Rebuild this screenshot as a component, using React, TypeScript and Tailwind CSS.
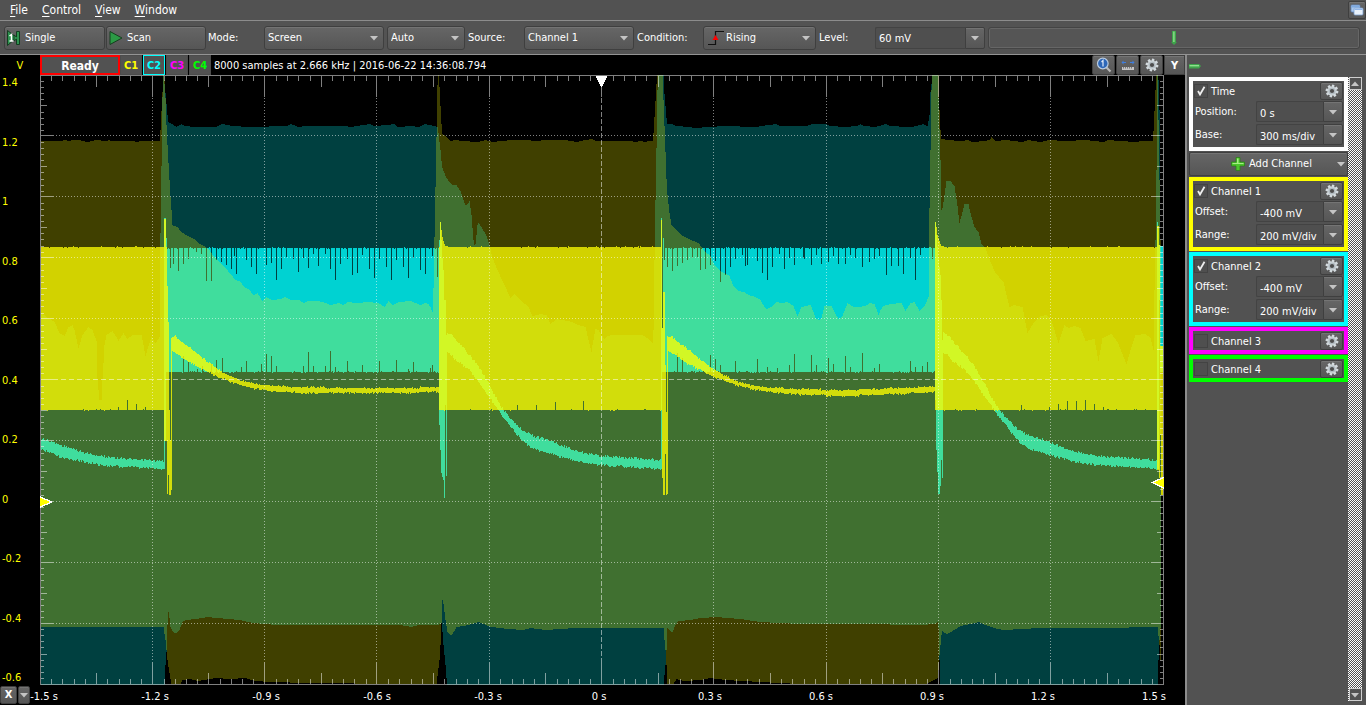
import React from "react";

type Pt = [number, number];
type Spikes = Record<number, number>;

const pts = (s: string): Pt[] =>
  s
    .trim()
    .split(/\s+/)
    .map((p) => p.split(",").map(Number) as Pt);

const spikes = (s: string): Spikes => {
  const out: Spikes = {};
  for (const p of s.trim().split(/\s+/)) {
    const [x, y] = p.split(":").map(Number);
    out[x] = y;
  }
  return out;
};

const at = (p: Pt[], x: number): number => {
  if (x <= p[0][0]) return p[0][1];
  for (let i = 1; i < p.length; i++) {
    if (x <= p[i][0]) {
      const [x0, y0] = p[i - 1];
      const [x1, y1] = p[i];
      return y0 + ((y1 - y0) * (x - x0)) / (x1 - x0);
    }
  }
  return p[p.length - 1][1];
};

const noise = (x: number, seed: number) => {
  const v = Math.sin(x * 12.9898 + seed * 78.233) * 43758.5453;
  return v - Math.floor(v);
};

/** One column per sample bucket, from the upper to the lower limit. */
function band(x0: number, x1: number, top: Pt[], bottom: Pt[], jitter = 0, up: Spikes = {}, down: Spikes = {}) {
  let d = "";
  for (let x = x0; x < x1; x++) {
    let a = at(top, x);
    let b = at(bottom, x);
    if (jitter) {
      a += Math.round((noise(x, 1) - 0.5) * 2 * jitter);
      b += Math.round((noise(x, 2) - 0.5) * 2 * jitter);
    }
    a = Math.round(up[x] ?? a);
    b = Math.round(down[x] ?? b);
    if (b > a) d += `M${x} ${a}h1V${b}h-1z`;
  }
  return d;
}

const cyanEnvTop = pts(`41,313 46,317 50,319 54,322 59,333 64,336 68,327 72,325 74,330 78,348 82,335 88,327 92,330 96,341
 97,380 99,400 101,400 102,380 104,345 106,335 112,331 116,337 118,341 123,333 127,339 132,335 141,335 143,345 145,356 148,346
 151,337 155,343 159,337 160,233 161,166 162,97 163,75 164,84 165,93 166,104 167,115 168,122 172,124 176,127 181,124
 184,126 196,127 216,127 221,124 228,125 231,126 250,127 286,126 290,124 294,125 298,127 304,126 345,126 350,127 356,126
 370,124 373,126 387,125 394,124 397,127 412,126 418,127 424,124 430,125 437,127 438,133 439,142 440,150 441,161 442,168
 445,176 448,181 452,185 456,185 460,191 463,200 465,205 467,204 469,201 471,215 473,240 474,245 475,244 477,225 478,223
 481,227 486,236 489,245 492,258 497,270 503,283 510,298 514,294 520,300 528,307 532,316 540,314 546,315 550,324 556,319
 568,321 574,323 578,325 585,327 588,340 591,352 592,345 595,329 598,330 604,339 607,336 612,335 642,335 648,339 652,343
 653,330 654,260 655,200 656,148 657,90 658,75 663,75 664,94 665,106 666,118 667,124 672,124 676,126 690,127 694,128
 724,126 755,127 768,125 776,124 780,126 806,126 812,124 825,124 830,126 845,127 856,126 860,124 864,126 875,127 885,124
 890,126 908,127 912,127 923,124 927,126 929,115 930,92 932,75 937,75 938,98 940,160 941,210 942,208 944,195 946,181
 950,181 954,186 957,206 959,223 962,212 964,204 968,204 970,213 974,227 978,232 981,244 985,248 990,262 995,273 1003,282
 1006,295 1009,307 1014,305 1022,307 1027,333 1033,323 1040,316 1046,315 1051,321 1058,343 1064,325 1068,328 1074,326
 1080,328 1085,341 1094,339 1098,361 1102,338 1111,334 1117,342 1126,364 1130,350 1135,335 1145,334 1150,338 1153,350
 1154,290 1155,240 1156,170 1157,75 1158,80 1159,110 1160,245`);

const cyanEnvBottom = pts(`41,690 164,690 165,665 166,652 167,625 168,612 169,618 170,627 172,631 174,633 176,633 179,630
 182,622 185,620 195,619 207,617 217,618 228,619 240,620 247,622 262,624 280,625 400,625 411,627 418,625 438,625 441,623
 442,632 443,645 445,665 447,690 663,690 664,675 665,665 666,650 667,628 670,631 672,632 675,625 678,621 690,620 700,618
 716,617 740,619 760,622 800,624 880,624 900,625 920,625 935,624 937,622 938,628 939,660 940,690 1157,690 1158,660
 1159,640 1161,615`);

const yellowEnvTop = pts(`41,141 61,141 63,140 66,140 68,141 72,140 79,140 82,141 87,142 96,140 106,141 108,140 112,141
 133,141 137,142 140,141 159,141 160,130 161,111 162,92 163,75 164,80 165,98 166,125 167,145 168,163 169,180 170,197
 171,210 172,225 174,226 177,227 180,231 185,235 190,237 194,239 198,243 204,246 209,250 213,256 219,262 225,268 230,274
 235,280 239,281 244,287 249,290 253,295 257,293 260,298 262,301 266,297 272,300 280,299 285,297 290,300 299,300 303,303
 308,301 318,301 325,303 330,305 338,303 343,305 347,302 357,303 368,302 378,303 384,307 388,301 392,305 398,302 410,301
 415,303 420,305 425,303 428,304 430,307 432,312 433,288 434,237 435,187 436,137 437,85 438,75 439,87 440,106 441,124
 442,134 445,136 450,141 455,140 463,141 477,142 485,140 492,142 500,141 512,140 530,140 532,141 548,140 565,140 576,142
 585,140 592,139 596,141 632,141 634,142 640,141 645,142 648,141 652,141 653,133 654,117 655,101 656,84 657,75 662,75
 663,100 664,126 665,152 666,179 667,195 668,204 669,213 671,225 676,230 681,235 687,238 693,241 698,243 701,247 705,252
 710,256 714,265 720,271 729,276 733,286 738,291 744,292 748,295 755,297 760,300 764,307 766,309 772,306 776,302 782,303
 787,302 793,306 797,316 801,307 810,305 813,312 815,318 819,320 821,318 824,306 831,306 834,312 838,319 842,316 847,303
 853,307 858,307 865,306 869,303 874,304 876,309 878,315 880,310 883,306 890,304 901,303 905,311 910,303 914,302 919,311
 924,306 928,297 929,208 930,150 931,90 932,75 938,75 939,110 940,130 941,139 948,140 960,141 968,140 972,142 984,141
 989,140 991,137 995,141 1005,140 1022,142 1028,140 1040,142 1048,140 1065,141 1085,140 1103,142 1108,140 1120,141
 1135,142 1142,141 1152,141 1153,131 1154,111 1155,90 1156,75 1157,75 1158,120 1159,180 1160,240`);

const yellowEnvBottom = pts(`41,627 163,627 165,640 167,660 169,673 171,684 180,684 182,680 190,679 198,681 215,678 230,679
 245,678 255,681 270,682 310,683 400,684 436,684 439,660 440,645 441,623 442,600 443,604 445,620 447,632 450,635 452,634
 456,627 468,625 478,622 488,626 492,627 508,629 523,630 530,628 545,630 560,629 575,628 663,628 664,640 665,650 666,665
 667,684 673,684 676,679 684,681 700,680 710,678 725,680 760,682 800,684 925,684 930,682 937,678 938,670 939,655 940,645
 941,635 942,631 946,634 952,631 960,626 970,624 978,622 985,625 997,629 1005,630 1020,629 1040,628 1100,628 1157,627
 1158,636 1159,645 1160,660`);

const flat = (y: number): Pt[] => [[0, y]];

const cyanDips2 = spikes(`170:268 173:264 178:271 183:264 188:259 196:252 201:254 206:281 211:281 216:260 221:262 226:265
 231:269 234:256 236:274 246:260 251:267 256:274 266:265 271:263 276:280 281:269 286:257 293:259 298:272 303:258 308:268
 313:254 318:266 325:254 330:269 335:280 340:264 347:259 352:275 357:273 362:255 369:269 374:278 379:259 386:267 391:280
 396:260 403:267 408:278 413:258 420:270 425:274 432:256 437:277`);
const cyanRises2 = spikes(`183:356 188:362 197:369 202:366 211:364 216:360 222:358 241:367 246:361 261:364 266:354 271:356
 276:366 303:366 308:352 313:366 325:366 330:351 335:367 347:361 362:365 379:361 396:360 408:369 413:362 430:368 432:365`);
const cyanDips4 = spikes(`664:260 667:267 672:271 677:266 682:263 687:260 692:258 697:257 700:270 705:269 710:265 715:261
 720:282 725:275 730:267 735:259 742:255 745:266 747:265 757:261 762:273 767:280 772:267 779:254 784:269 789:258 794:265
 803:258 804:259 811:265 816:255 821:264 828:262 833:256 838:264 845:264 850:255 855:258 862:267 869:262 874:259 879:256
 886:275 891:266 898:266 903:274 910:258 915:280 920:255 932:259`);
const cyanRises4 = spikes(`677:353 682:358 710:355 715:359 720:365 735:361 757:359 767:367 777:368 789:365 794:354 811:355
 816:365 828:358 833:364 845:356 850:367 862:353 874:368 879:364 910:361 915:367 922:366 927:362`);
const yellowRises = spikes(`118:407 127:400 136:404 145:407 517:405 536:405 555:402 583:401 1021:405 1049:407 1058:404
 1067:401 1076:401 1085:400 1094:404 1103:407`);

const decayTop = `450,334 460,345 470,356 480,369 490,387 500,406 510,418 522,430 533,436 545,439 560,445 580,452 600,456
 630,458 662,460`;
const decayBottom = `450,354 455,360 468,369 476,379 490,399 502,416 510,426 515,433 523,442 533,449 545,452 560,457 580,462
 600,465 630,467 661,469`;
const shift = (p: Pt[], dx: number): Pt[] => p.map(([x, y]) => [x + dx, y]);

const CYAN_ENV = band(41, 1161, cyanEnvTop, cyanEnvBottom) + "M1160 246h3V372h-3z";
const YELLOW_ENV = band(41, 1161, yellowEnvTop, yellowEnvBottom) + "M1161 346h2V495h-2z";

const CYAN_MAIN =
  band(
    41,
    164,
    pts("41,439 50,441 60,445 70,448 85,453 100,456 120,458 140,460 163,461"),
    pts("41,450 50,452 60,457 80,461 100,465 125,467 150,468 164,469"),
    1,
  ) +
  "M164 218h2V441h-1V469h-1zM166 238h1V372h-1z" +
  band(167, 439, flat(248.4), flat(371.6), 0.6, cyanDips2, cyanRises2) +
  band(439, 446, pts("439,240 440,222 441,240 442,258 443,270 444,300 445,300"), pts("439,425 440,450 441,473 443,480 444,498 445,405")) +
  "M446 335h1V476h-1z" +
  band(447, 661, pts(`447,333 ${decayTop}`), pts(`447,353 ${decayBottom}`), 1) +
  "M661 218h1V469h-1zM662 328h1V238h1V372h-2z" +
  band(664, 935, flat(248.4), flat(371.6), 0.6, cyanDips4, cyanRises4) +
  band(935, 943, pts("935,222 936,235 938,258 940,275 941,300 942,340"), pts("935,400 936,450 938,494 939,494 940,486 941,460 942,478")) +
  band(943, 1158, shift(pts(`447,333 ${decayTop}`), 496), shift(pts(`447,353 ${decayBottom}`), 496), 1) +
  "M1157 222h1V245h2V300h-1V469h-2zM1160 246h3V372h-3z";

const curveBottom =
  "172,351 180,356 190,363 205,371 220,378 240,385 255,389 280,392 310,393 350,393 400,393 438,392";
const curveTop =
  "171,337 175,336 180,341 190,348 200,356 210,364 225,374 240,380 255,384 275,386 300,387 350,388 400,388 438,387";

const YELLOW_MAIN =
  band(41, 164, flat(247.4), flat(410.4), 0.55, {}, yellowRises) +
  "M164 219h2V441h-2zM166 247h1V441h-1zM167 286h1V494h-1zM168 322h1V475h-1zM169 410h1V495h-1zM170 440h1V495h-1zM171 338h1V490h-1z" +
  band(172, 439, pts(curveTop), pts(curveBottom), 0.7) +
  band(439, 661, pts("439,247 440,222 441,230 442,237 443,241 445,246 450,247"), flat(410.4), 0.55, {}, yellowRises) +
  "M661 220h1V410h-1zM662 328h1V478h-1zM663 292h2V495h-2zM665 365h1V454h-1zM666 412h1V495h-1zM667 336h1V494h-1z" +
  band(668, 935, shift(pts("171,337 175,336 180,341 190,348 200,356 210,364 225,374 240,381 255,385 275,388 300,389 350,390 400,388 438,387"), 496), shift(pts("172,351 180,356 190,363 205,371 220,378 240,385 255,389 280,393 310,395 350,396 400,394 438,392"), 496), 0.7) +
  band(935, 1157, pts("935,222 936,228 937,235 939,241 941,246 946,247"), flat(410.4), 0.55, {}, yellowRises) +
  "M1157 226h2V470h-2zM1159 245h1V478h-1zM1160 346h1V435h-1zM1161 346h2V495h-2z";

const GRID_Y = [135, 196, 257, 318, 379, 440, 501, 562, 623];
const GRID_X = [152, 264, 376, 489, 601, 713, 826, 938, 1050];

function ticks() {
  let d = "";
  for (let i = 1; i < 100; i++) {
    const x = i % 10 === 0 ? GRID_X[i / 10 - 1] : Math.round(40 + i * 11.23);
    const len = i % 10 === 0 ? 21 : i % 5 === 0 ? 11 : 5;
    d += `M${x} 76h1v${len}h-1zM${x} ${684 - len}h1v${len}h-1z`;
    const y = i % 10 === 0 ? GRID_Y[i / 10 - 1] : Math.round(75 + i * 6.09);
    const w = i % 10 === 0 ? 12 : i % 5 === 0 ? 6 : 3;
    if (y < 684) d += `M41 ${y}h${w}v1h-${w}zM${1163 - w} ${y}h${w}v1h-${w}z`;
  }
  return d;
}
const TICKS = ticks();

function Plot() {
  return (
    <svg
      className="h-full min-h-0 w-full min-w-0"
      viewBox="40 75 1124 610"
      preserveAspectRatio="none"
      role="img"
      aria-label="Oscilloscope channels 1 and 2"
      shapeRendering="crispEdges"
    >
      <path d={CYAN_ENV} fill="#00ffff" fillOpacity="0.25" />
      <path d={CYAN_MAIN} fill="#00ffff" fillOpacity="0.765" />
      <path d={YELLOW_ENV} fill="#ffff00" fillOpacity="0.25" />
      <path d={YELLOW_MAIN} fill="#ffff00" fillOpacity="0.765" />
      <g stroke="#ffffff" strokeOpacity="0.5" strokeWidth="1" fill="none">
        {GRID_Y.map((y) => (
          <path key={y} d={`M53 ${y + 0.5}H1151`} strokeDasharray={y === 379 ? "5 3" : "1 2"} />
        ))}
        {GRID_X.map((x) => (
          <path key={x} d={`M${x + 0.5} 98V663`} strokeDasharray={x === 601 ? "5 2" : "1 2"} />
        ))}
        <path d="M40.5 684.5V75.5H1163.5V684.5Z" />
      </g>
      <path d={TICKS} fill="#ffffff" fillOpacity="0.5" />
      <path d="M595 75.500h13l-6.500 12z" fill="#ffffff" />
      <path d="M40 496l13 6-13 6z" fill="#ffffff" />
      <path d="M40 497.500l10 4.500-10 4.500z" fill="#ffff00" />
      <path d="M1164 476.500l-13 6 13 6.500z" fill="#ffffff" />
      <path d="M1164 478l-10 4.500 10 5z" fill="#ffff00" />
    </svg>
  );
}

const raised = "border border-[#3f3f3f] bg-linear-to-b from-[#666666] to-[#565656] shadow-[inset_0_1px_0_#747474]";
const sunken = "border border-[#434343] bg-[#4f4f4f]";

function Caret({ className = "" }: { className?: string }) {
  return (
    <svg className={`pointer-events-none h-1.5 w-2 ${className}`} viewBox="0 0 8 6" aria-hidden="true">
      <path d="M0 1h8L4 5.500z" fill="#c4c4c4" />
    </svg>
  );
}

function Gear() {
  return (
    <svg width="14" height="14" viewBox="0 0 14 14" aria-hidden="true">
      <g fill="#d3dade">
        {[0, 45, 90, 135].map((a) => (
          <rect key={a} x="5.700" y="0.600" width="2.600" height="12.800" rx="0.500" transform={`rotate(${a + 12} 7 7)`} />
        ))}
        <circle cx="7" cy="7" r="4.600" />
      </g>
      <circle cx="7" cy="7" r="3.600" fill="#b3bcc2" />
      <circle cx="7" cy="7" r="2.100" fill="#4d4d4d" />
    </svg>
  );
}

function Drop({ label, id, width, options, icon }: { label: string; id: string; width: string; options: string[]; icon?: React.ReactNode }) {
  return (
    <div className={`grid h-6 items-center ${width}`}>
      <select
        id={id}
        aria-label={label}
        className={`col-start-1 row-start-1 h-full w-full appearance-none rounded-[3px] ${raised} ${icon ? "pl-[22px]" : "pl-[3px]"}`}
      >
        {options.map((o) => (
          <option key={o}>{o}</option>
        ))}
      </select>
      {icon && <span className="pointer-events-none col-start-1 row-start-1 justify-self-start pl-1">{icon}</span>}
      <Caret className="col-start-1 row-start-1 mr-1.5 justify-self-end" />
    </div>
  );
}

function Combo({ id, value, label, className }: { id: string; value: string; label: string; className: string }) {
  return (
    <div className={`flex ${className}`}>
      <input id={id} defaultValue={value} className={`h-full w-0 min-w-0 flex-1 rounded-l-[2px] border-r-0 pt-0.5 pl-[3px] ${sunken}`} />
      <button type="button" aria-label={`${label} presets`} className={`flex h-full w-5 items-center justify-center rounded-r-[2px] ${raised}`}>
        <Caret />
      </button>
    </div>
  );
}

function MenuBar() {
  return (
    <header className="flex h-[21px] shrink-0 items-center border-b border-[#8c8c8c] bg-[#525252] pl-2.5">
      <nav className="flex gap-3.5 text-[12px] leading-4" aria-label="Main menu">
        {["File", "Control", "View", "Window"].map((m) => (
          <button key={m} type="button">
            <span className="underline underline-offset-2">{m[0]}</span>
            {m.slice(1)}
          </button>
        ))}
      </nav>
      <button type="button" aria-label="Restore window" className={`ml-auto flex h-[18px] w-[18px] items-center justify-center rounded-[2px] ${raised}`}>
        <svg width="14" height="14" viewBox="0 0 14 14" aria-hidden="true">
          <rect x="1" y="2" width="9" height="7" rx="1" fill="#a9c8ee" stroke="#5f86bd" strokeWidth="0.800" />
          <rect x="1.500" y="2.500" width="8" height="2" fill="#7ea9e0" />
          <rect x="4" y="5" width="9" height="7" rx="1" fill="#e8f1fb" stroke="#7fa2d0" strokeWidth="0.800" />
          <rect x="4.500" y="5.500" width="8" height="1.500" fill="#8fb5ea" />
        </svg>
      </button>
    </header>
  );
}

function Toolbar() {
  return (
    <div className="flex h-[34px] shrink-0 items-center border-b border-[#949494] bg-[#535353] pr-1.5 pl-1">
      <button type="button" className={`flex h-6 w-[101px] items-center gap-1 rounded-[3px] pl-0.5 ${raised}`}>
        <svg width="14" height="16" viewBox="0 0 14 16" aria-hidden="true">
          <path d="M0.500 0.500l9 7-9 8z" fill="#2f9350" stroke="#143d20" />
          <path d="M9.500 1.500h3v13h-3V9L7 11V5l2.500 2z" fill="#2f9350" stroke="#143d20" />
          <path d="M2.500 6l2-1.500V11M2.500 11h4" stroke="#ffffff" strokeWidth="1.500" fill="none" />
        </svg>
        Single
      </button>
      <button type="button" className={`ml-px flex h-6 w-[100px] items-center gap-1 rounded-[3px] pl-0.5 ${raised}`}>
        <svg width="14" height="16" viewBox="0 0 14 16" aria-hidden="true">
          <path d="M1 1.500l12 6.500-12 6.500z" fill="#2b9a45" stroke="#153f1f" />
        </svg>
        Scan
      </button>
      <label htmlFor="mode" className="w-[58px] pl-0.5">
        Mode:
      </label>
      <Drop id="mode" label="Mode" width="w-[120px]" options={["Screen", "Shift", "Record"]} />
      <div className="ml-[3px]">
        <Drop id="auto" label="Trigger mode" width="w-[78px]" options={["Auto", "Normal", "None"]} />
      </div>
      <label htmlFor="source" className="w-[59px] pl-[3px]">
        Source:
      </label>
      <Drop id="source" label="Source" width="w-[110px]" options={["Channel 1", "Channel 2"]} />
      <label htmlFor="condition" className="w-[69px] pl-[3px]">
        Condition:
      </label>
      <Drop
        id="condition"
        label="Condition"
        width="w-[113px]"
        options={["Rising", "Falling"]}
        icon={
          <svg width="18" height="16" viewBox="0 0 18 16" aria-hidden="true">
            <path d="M1 14.500h7.500v-13H17" fill="none" stroke="#111111" strokeWidth="1.200" />
            <path d="M5.500 10h6L8.500 5z" fill="#ff0000" />
          </svg>
        }
      />
      <label htmlFor="level" className="w-[59px] pl-[3px]">
        Level:
      </label>
      <Combo id="level" label="Level" value="60 mV" className="h-[22px] w-[110px]" />
      <div className="ml-[3px] grid h-[22px] min-w-0 flex-1 items-center rounded-[3px] border border-[#444444] bg-[#555555] shadow-[inset_0_0_0_1px_#666666]">
        <input type="range" aria-label="Level" className="col-start-1 row-start-1 h-full w-full cursor-pointer opacity-0" />
        <svg className="pointer-events-none col-start-1 row-start-1 justify-self-center" width="6" height="14" viewBox="0 0 6 14" aria-hidden="true">
          <path d="M1 0h4v11h1l-3 3-3-3h1z" fill="#3ea34a" />
          <path d="M2.200 0.500h1.400V11H2.200z" fill="#8fe08d" />
        </svg>
      </div>
    </div>
  );
}

const channelTabs = [
  { name: "C1", style: "text-[#ffff00] border-[#4c4c4c]" },
  { name: "C2", style: "text-[#00ffff] border-[#00ffff]" },
  { name: "C3", style: "text-[#ff00ff] border-[#4c4c4c]" },
  { name: "C4", style: "text-[#00ff00] border-[#4c4c4c]" },
];

function Scope() {
  const iconButton = `flex h-5 w-[23px] items-center justify-center rounded-[2px] ${raised}`;
  return (
    <main className="flex min-w-0 flex-1 flex-col bg-black text-white">
      <div className="flex h-5 shrink-0 items-stretch">
        <div className="flex w-10 items-center justify-center pt-0.5 text-[#ffff00]">V</div>
        <div className="flex w-20 items-center justify-center border-2 border-[#ff0000] bg-[#525252] pt-0.5 text-[12px] font-bold">Ready</div>
        <div className="flex gap-px">
          {channelTabs.map((c) => (
            <button key={c.name} type="button" className={`w-[22px] border bg-[#525252] pt-0.5 text-[11px] font-bold ${c.style}`}>
              {c.name}
            </button>
          ))}
        </div>
        <p className="self-center pt-0.5 pl-[3px] whitespace-nowrap">8000 samples at 2.666 kHz | 2016-06-22 14:36:08.794</p>
        <div className="ml-auto flex gap-px">
          <button type="button" aria-label="Zoom 1:1" className={iconButton}>
            <svg width="16" height="16" viewBox="0 0 16 16" aria-hidden="true">
              <path d="M10.500 10.500l4 4" stroke="#b8b8b8" strokeWidth="2.200" />
              <circle cx="6.800" cy="6.500" r="5.300" fill="#2d67b8" stroke="#b9cbe0" strokeWidth="1.200" />
              <path d="M5.500 5l1.500-1.500v6" stroke="#dce8f8" strokeWidth="1.200" fill="none" />
            </svg>
          </button>
          <button type="button" aria-label="Measure" className={iconButton}>
            <svg width="14" height="14" viewBox="0 0 14 14" aria-hidden="true">
              <path d="M1.500 4.500H5M9 4.500h3.500" stroke="#3f7fe0" strokeWidth="1.200" />
              <path d="M0.500 4.500l2-2v4zM13.500 4.500l-2-2v4z" fill="#3f7fe0" />
              <path d="M1 9h12v3H1z" fill="#c4c4c4" />
              <path d="M2.500 9v1.500M4.500 9v1.500M6.500 9v1.500M8.500 9v1.500M10.500 9v1.500" stroke="#666666" strokeWidth="0.800" />
            </svg>
          </button>
          <button type="button" aria-label="Plot settings" className={iconButton}>
            <Gear />
          </button>
          <button type="button" className={`h-5 w-[21px] pt-0.5 text-[11px] font-bold ${raised}`}>
            Y
          </button>
        </div>
      </div>
      <div className="flex min-h-0 flex-1">
        <div className="flex w-10 shrink-0 flex-col justify-between pt-px pl-0.5 leading-[14px] text-[#ffff00]">
          {["1.4", "1.2", "1", "0.8", "0.6", "0.4", "0.2", "0", "-0.2", "-0.4", "-0.6"].map((t) => (
            <span key={t}>{t}</span>
          ))}
        </div>
        <div className="min-h-0 min-w-0 flex-1">
          <Plot />
        </div>
        <div className="w-[21px] shrink-0" />
      </div>
      <div className="flex h-5 shrink-0 items-center">
        <button type="button" className={`h-[18px] w-[17px] rounded-[2px] text-[11px] font-bold ${raised}`}>
          X
        </button>
        <button type="button" aria-label="X axis options" className={`ml-px flex h-[18px] w-3 items-center justify-center rounded-[2px] ${raised}`}>
          <Caret />
        </button>
        <div className="-ml-px flex min-w-0 flex-1 justify-between pt-[3px] pr-4">
          {["-1.5 s", "-1.2 s", "-0.9 s", "-0.6 s", "-0.3 s", "0 s", "0.3 s", "0.6 s", "0.9 s", "1.2 s", "1.5 s"].map((t) => (
            <span key={t} className="w-[30px] text-center whitespace-nowrap">
              {t}
            </span>
          ))}
        </div>
      </div>
    </main>
  );
}

type Field = { label: string; value: string };

function Group({ name, border, fields, on }: { name: string; border: string; fields: Field[]; on: boolean }) {
  const id = name.toLowerCase().replace(" ", "-");
  return (
    <section className={`flex flex-col border-4 bg-[#525252] pr-px pl-px ${border}`}>
      <div className="flex h-[19px] items-center">
        <span className={`grid h-3.5 w-3.5 items-center justify-items-center ${sunken}`}>
          <input id={id} type="checkbox" defaultChecked={on} className="peer col-start-1 row-start-1 h-full w-full appearance-none" />
          <svg className="pointer-events-none invisible col-start-1 row-start-1 peer-checked:visible" width="9" height="10" viewBox="0 0 9 10" aria-hidden="true">
            <path d="M1 5l2 3.500L7.500 0.800" fill="none" stroke="#eeeeee" strokeWidth="1.800" />
          </svg>
        </span>
        <label htmlFor={id} className="flex-1 pt-0.5 pl-[3px]">
          {name}
        </label>
        <button type="button" aria-label={`${name} settings`} className={`flex h-[18px] w-[23px] items-center justify-center rounded-[2px] ${raised}`}>
          <Gear />
        </button>
      </div>
      {fields.length > 0 && (
        <div className="flex flex-col pb-px">
          {fields.map((f) => (
            <div key={f.label} className="flex h-[23px] items-center">
              <label htmlFor={`${id}-${f.label}`} className="w-[62px] pl-px">
                {f.label}:
              </label>
              <Combo id={`${id}-${f.label}`} label={f.label} value={f.value} className="h-[21px] min-w-0 flex-1 [&>input]:pt-1" />
            </div>
          ))}
        </div>
      )}
    </section>
  );
}

function SidePanel() {
  const channel = [
    { label: "Offset", value: "-400 mV" },
    { label: "Range", value: "200 mV/div" },
  ];
  const scrollButton = "flex h-[13px] w-[13px] shrink-0 items-center justify-center border border-[#cfcfcf] bg-[#525252]";
  return (
    <aside className="flex w-[181px] shrink-0 flex-col border-l-2 border-[#8c8c8c] bg-[#525252] pr-1 pb-1 pl-0.5">
      <div className="flex h-[22px] shrink-0 items-center">
        <svg width="12" height="6" viewBox="0 0 12 6" aria-hidden="true">
          <path d="M0 1h10l2 2-2 2.500H0z" fill="#3fa54b" />
          <path d="M0.500 2h9.500v1.400H0.500z" fill="#8fe08d" />
        </svg>
      </div>
      <div className="flex min-h-0 flex-1">
        <div className="flex min-w-0 flex-1 flex-col gap-px">
          <Group name="Time" border="border-white" on fields={[{ label: "Position", value: "0 s" }, { label: "Base", value: "300 ms/div" }]} />
          <button type="button" className={`flex h-6 shrink-0 items-center rounded-[2px] ${raised}`}>
            <span className="flex flex-1 items-center justify-center gap-1 pl-2">
              <svg width="14" height="14" viewBox="0 0 14 14" aria-hidden="true">
                <path d="M5 0.500h4V5h4.500v4H9v4.500H5V9H0.500V5H5z" fill="#4cc52c" stroke="#2f7f1c" strokeWidth="0.800" />
                <path d="M6 1.500h1.500v4.500H12.500v1H1.500V6H6z" fill="#a6ee86" />
              </svg>
              Add Channel
            </span>
            <Caret className="-ml-2 mr-0.5" />
          </button>
          <Group name="Channel 1" border="border-[#ffff00]" on fields={channel} />
          <Group name="Channel 2" border="border-[#00ffff]" on fields={channel} />
          <Group name="Channel 3" border="border-[#ff00ff]" on={false} fields={[]} />
          <Group name="Channel 4" border="border-[#00ff00]" on={false} fields={[]} />
        </div>
        <div className="flex w-3.5 shrink-0 flex-col items-center justify-between bg-[repeating-conic-gradient(#ffffff_0_25%,#525252_0_50%)] bg-size-[2px_2px]">
          <button type="button" aria-label="Scroll up" className={scrollButton}>
            <Caret className="rotate-180" />
          </button>
          <button type="button" aria-label="Scroll down" className={scrollButton}>
            <Caret />
          </button>
        </div>
      </div>
    </aside>
  );
}

export default function App() {
  return (
    <div className="h-screen min-h-[640px] min-w-[1200px] bg-white pr-0.5 pb-[3px]">
      <div className="flex h-full flex-col font-['DejaVu_Sans_Condensed','Noto_Sans',sans-serif] text-[11px] leading-[14px] text-white">
        <MenuBar />
        <Toolbar />
        <div className="flex min-h-0 flex-1">
          <Scope />
          <SidePanel />
        </div>
      </div>
    </div>
  );
}
